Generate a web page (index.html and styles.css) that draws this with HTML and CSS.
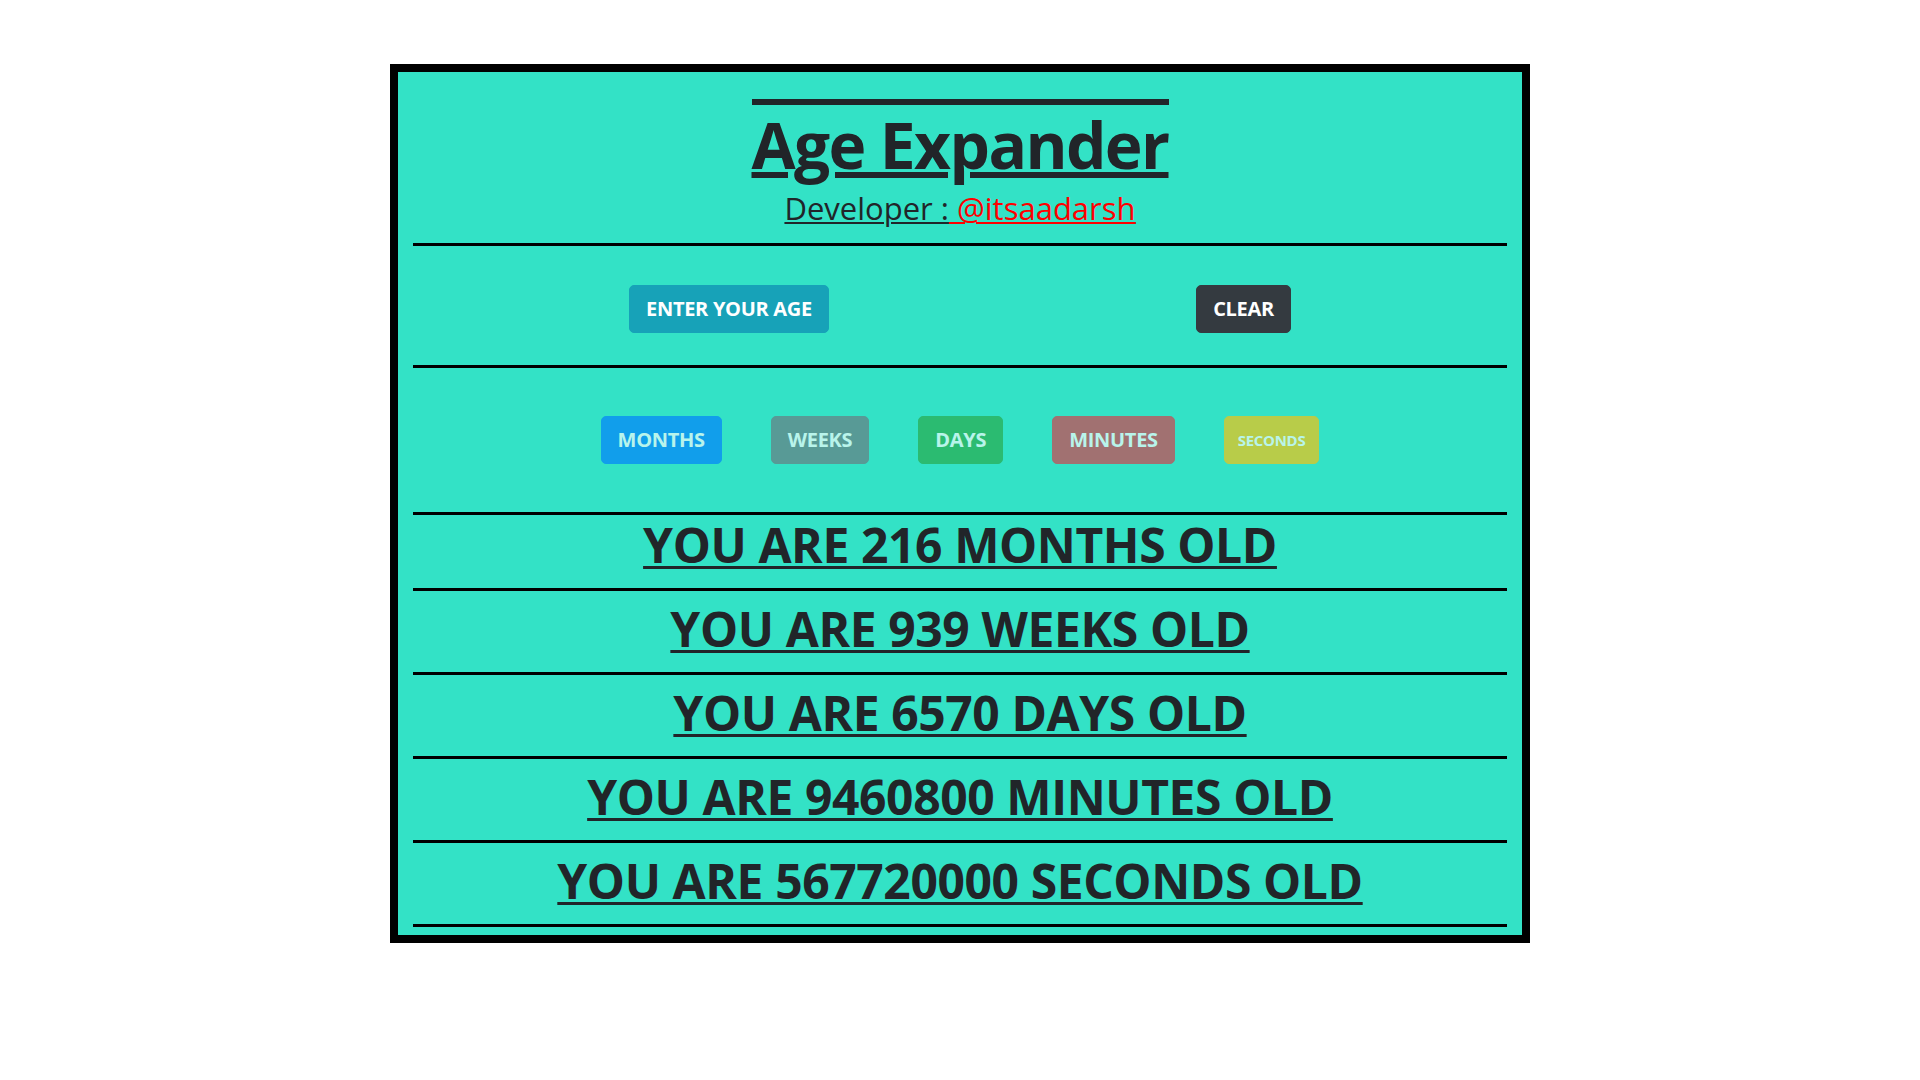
FILE: index.html
```html
<!DOCTYPE html>
<html lang="en">
<head>
<meta charset="utf-8">
<title>Age Expander</title>
<link rel="stylesheet" href="styles.css">
</head>
<body>
<main class="card">
  <header class="head">
    <h1 class="title">Age Expander</h1>
    <h3 class="dev"><u>Developer :<a class="dev-link" href="#"> @itsaadarsh</a></u></h3>
  </header>
  <hr class="rule">
  <div class="actions">
    <button class="btn btn-info">ENTER YOUR AGE</button>
    <button class="btn btn-dark">CLEAR</button>
  </div>
  <hr class="rule">
  <div class="units">
    <button class="btn unit unit-months" disabled>MONTHS</button>
    <button class="btn unit unit-weeks" disabled>WEEKS</button>
    <button class="btn unit unit-days" disabled>DAYS</button>
    <button class="btn unit unit-minutes" disabled>MINUTES</button>
    <button class="btn unit unit-seconds" disabled>SECONDS</button>
  </div>
  <hr class="rule">
  <h2 class="result result-first"><u>YOU ARE 216 MONTHS OLD</u></h2>
  <hr class="rule">
  <h2 class="result"><u>YOU ARE 939 WEEKS OLD</u></h2>
  <hr class="rule">
  <h2 class="result"><u>YOU ARE 6570 DAYS OLD</u></h2>
  <hr class="rule">
  <h2 class="result"><u>YOU ARE 9460800 MINUTES OLD</u></h2>
  <hr class="rule">
  <h2 class="result"><u>YOU ARE 567720000 SECONDS OLD</u></h2>
  <hr class="rule">
</main>
</body>
</html>
```
FILE: styles.css
```css
* { box-sizing: border-box; }

html, body {
  margin: 0;
  padding: 0;
  background: #ffffff;
}

body {
  font-family: "Open Sans", "Noto Sans", sans-serif;
  color: #212529;
}

.card {
  width: 1140px;
  margin: 64px auto 0;
  border: 8px solid #000000;
  background: #33e2c6;
  padding: 0 15px 8px;
  display: flex;
  flex-direction: column;
}

.head {
  display: flex;
  flex-direction: column;
  align-items: center;
}

.title {
  margin: 27px 0 0;
  border-top: 6px solid #212529;
  font-size: 64px;
  line-height: 80px;
  font-weight: 700;
  letter-spacing: -1.6px;
  color: #212529;
  text-decoration: underline;
  text-decoration-thickness: 6px;
  text-underline-offset: 3px;
}

.dev {
  margin: 3px 0 0;
  font-size: 31px;
  line-height: 40px;
  font-weight: 400;
  letter-spacing: 0;
  color: #212529;
}

.dev u {
  text-decoration-thickness: 2px;
  text-underline-offset: 2px;
}

.dev-link {
  color: #ff0000;
  text-decoration: underline;
  text-decoration-thickness: 2px;
  text-underline-offset: 2px;
}

.rule {
  margin: 0;
  border: 0;
  border-top: 3px solid #000000;
  height: 0;
  width: 100%;
}

.rule:first-of-type { margin-top: 15px; }

.actions {
  display: grid;
  grid-template-columns: 632px 397px;
  justify-items: center;
  padding: 39px 0 32px;
}

.btn {
  font-family: "Open Sans", "Noto Sans", sans-serif;
  font-size: 20px;
  font-weight: 700;
  line-height: 30px;
  padding: 8px 16px;
  border: 1px solid transparent;
  border-radius: 5px;
  color: #ffffff;
  letter-spacing: -0.3px;
  cursor: pointer;
}

.btn-info { background: #17a2b8; border-color: #17a2b8; }
.btn-dark { background: #343a40; border-color: #343a40; }

.units {
  display: flex;
  justify-content: center;
  gap: 49px;
  padding: 48px 0;
}

.unit { opacity: 0.65; cursor: default; }
.unit-months { background: #007bff; border-color: #007bff; }
.unit-weeks { background: #6c757d; border-color: #6c757d; }
.unit-days { background: #28a745; border-color: #28a745; }
.unit-minutes { background: #dc3545; border-color: #dc3545; }
.unit-seconds {
  background: #ffc107;
  border-color: #ffc107;
  font-size: 15px;
  padding: 8px 13px;
}

.result {
  margin: 9px 0 14px;
  text-align: center;
  font-size: 48px;
  line-height: 58px;
  font-weight: 700;
  letter-spacing: -0.4px;
  color: #212529;
}

.result-first { margin-top: 1px; }

.result u {
  text-decoration-thickness: 3px;
  text-underline-offset: 3px;
}
```
